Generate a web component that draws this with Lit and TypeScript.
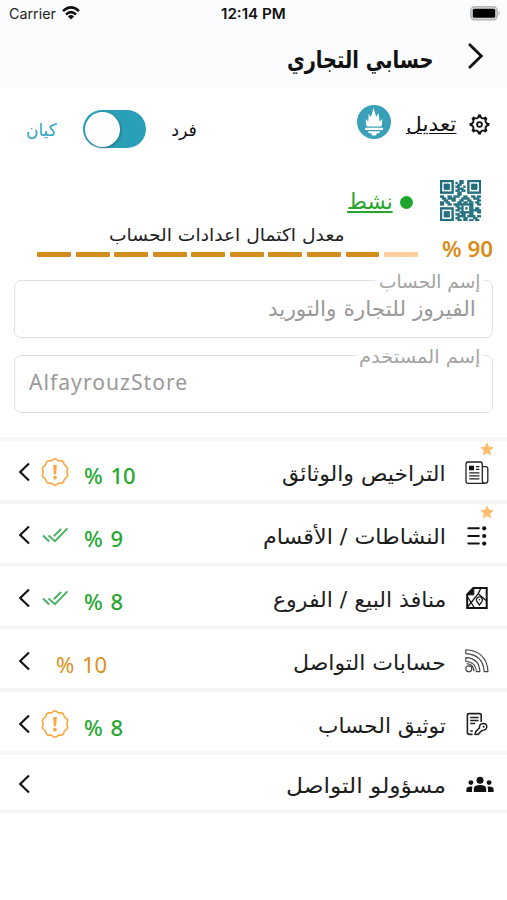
import { LitElement, html, svg, css, nothing, TemplateResult } from "lit";
import { customElement, property } from "lit/decorators.js";

/** One line of text stretched or squeezed horizontally to a given measure. */
@customElement("fit-text")
class FitText extends LitElement {
  @property({ type: Number }) measure = 100;
  static styles = css`
    :host { display: inline-block; white-space: nowrap; flex: none; }
    .run { display: inline-block; transform-origin: left center; text-decoration: inherit; text-underline-offset: inherit; }
    :host([dir="rtl"]) .run { transform-origin: right center; }
  `;
  render() {
    return html`<span class="run"><slot></slot></span>`;
  }
  updated() {
    this.style.width = `${this.measure}px`;
    const run = this.renderRoot.querySelector(".run") as HTMLElement;
    const natural = run.offsetWidth;
    if (natural) run.style.transform = `scaleX(${this.measure / natural})`;
  }
}

const QR_ROWS = [
  "111111100011001111111",
  "100000101011001000001",
  "101110100110001011101",
  "101110101100101011101",
  "101110100111001011101",
  "100000101101101000001",
  "111111100110001111111",
  "000000000110000000000",
  "110011011100110011011",
  "011011110001111001110",
  "001100110011001100011",
  "110110000110110110110",
  "110011011111111110011",
  "000000001101000110000",
  "111111100111010110110",
  "100000101101000111111",
  "101110100011111110011",
  "101110101101100110000",
  "101110100111101111011",
  "100000101100110001100",
  "111111100110110110110",
];

const scallop = (cx: number, cy: number, r: number, amp: number, lobes: number) => {
  let d = "";
  for (let i = 0; i <= 120; i++) {
    const t = (i / 120) * Math.PI * 2;
    const q = r + amp * Math.cos(lobes * t);
    d += `${i ? "L" : "M"}${(cx + q * Math.sin(t)).toFixed(2)} ${(cy - q * Math.cos(t)).toFixed(2)}`;
  }
  return d + "Z";
};

const icons: Record<string, TemplateResult> = {
  news: html`<svg width="26" height="26" viewBox="0 0 26 26" fill="none" stroke="#222" stroke-width="1.3">
    <path d="M18.3 20.5V4.2Q18.3 2 16.3 2H4Q2 2 2 4.2V21Q2 23.3 4.2 23.3H20.8Q23.8 23.3 23.8 20.6V8.6Q23.8 6.6 21.8 6.6H18.3M18.3 20.5Q18.3 23 20.6 23.2"/>
    <path d="M5.2 12.8H15.4M5.2 15.8H15.4M5.2 18.8H15.4M12 6.6H15.4M12 9.4H15.4"/>
    <path d="M5 5.7h5v4.6H5z" fill="#111" stroke="none"/></svg>`,
  list: html`<svg width="26" height="26" viewBox="0 0 26 26" stroke="#111" stroke-width="2" stroke-linecap="round">
    <path d="M4.3 5.3H14.8M4.3 13H14.8M4.3 20.6H14.8"/>
    <g fill="#111" stroke="none"><circle cx="20.2" cy="5.3" r="2.1"/><circle cx="20.2" cy="13" r="2.1"/><circle cx="20.2" cy="20.6" r="2.1"/></g></svg>`,
  map: html`<svg width="26" height="26" viewBox="0 0 26 26" fill="none" stroke="#111">
    <path d="M9.3 3H22.7V23H3.2V9.3Z" stroke-width="2"/>
    <path d="M9.8 2.6V9.8H2.6Z" fill="#111"/>
    <path d="M4 21.5L14.2 8.6L16.5 4M4 12.5L10.2 22.5M14 8.5L22 15.5" stroke-width="1.3"/>
    <path d="M15.4 20L12.8 16.3A3 3 0 1 1 18 16.3Z" stroke-width="1.3" fill="#fff"/><circle cx="15.4" cy="14.8" r=".8" fill="#111" stroke="none"/></svg>`,
  feed: html`<svg width="26" height="26" viewBox="0 0 26 26" fill="none" stroke="#444" stroke-width="1.15" stroke-linejoin="round">
    <circle cx="4.8" cy="20.8" r="3"/>
    <path d="M1.8 9.6Q15.4 10.2 15.9 23.6H12.4Q12 14 1.8 13.2Z"/>
    <path d="M1.8 1.8Q22.6 3 24 23.6H20.2Q19 6.6 1.8 5.6Z"/>
    <path d="M2.6 15.6Q9.6 16 10 23.2" /></svg>`,
  doc: html`<svg width="26" height="26" viewBox="0 0 26 26" fill="none" stroke="#222" stroke-width="1.6">
    <path d="M17.2 11V4.2Q17.2 2.6 15.4 2.6H5.2Q3.4 2.6 3.4 4.2V21.6Q3.4 23.4 5.2 23.4H8.6"/>
    <path d="M6.2 6.4H14.6M6.2 9.4H14.6M6.2 12.6H11M6.2 20H8.8" stroke-width="1.5"/>
    <path d="M11 23.2L12 20.2L15.4 17Q15.2 12.8 19 12.4Q23 12.5 22.8 16.2Q22 19.6 18 19.4L14 23.4Z" stroke-width="1.5"/>
    <circle cx="19.6" cy="15.7" r="1" fill="#222" stroke="none"/></svg>`,
  team: html`<svg class="team" width="28" height="26" viewBox="0 0 28 26" fill="#111">
    <circle cx="14" cy="9.2" r="3.5"/><circle cx="4.9" cy="11.6" r="2.4"/><circle cx="23.1" cy="11.6" r="2.4"/>
    <path d="M7.8 21.1V17.6Q8 13.9 14 13.9T20.2 17.6V21.1ZM.4 21.1V18.2Q.6 15.6 4.6 15.4L6.6 15.7Q6 16.8 6 18.2V21.1ZM27.6 21.1V18.2Q27.4 15.6 23.4 15.4L21.4 15.7Q22 16.8 22 18.2V21.1Z"/></svg>`,
};

const star = html`<svg class="star" width="14" height="14" viewBox="0 0 14 14" fill="#fdbd6c"><path d="M7 .3L9 4.8L13.8 5.3L10.2 8.5L11.2 13.4L7 10.9L2.8 13.4L3.8 8.5L.2 5.3L5 4.8Z"/></svg>`;
const chevron = html`<svg class="chev" width="12" height="20" viewBox="0 0 12 20" fill="none" stroke="#111" stroke-width="2.1"><path d="M11 1.6L2.2 10L11 18.4"/></svg>`;
const warn = html`<svg class="state" width="28" height="28" viewBox="0 0 28 28" fill="none" stroke="#f9a73e" stroke-width="1.6">
  <path d="${scallop(14, 14, 12.5, 0.65, 10)}"/><path d="M12.2 7H15.8L15.2 16.2H12.8Z" fill="#f9a73e" stroke="none"/><circle cx="14" cy="19.6" r="1.9" fill="#f9a73e" stroke="none"/></svg>`;
const checks = html`<svg class="state" width="28" height="28" viewBox="0 0 28 28" fill="none" stroke="#4cb265" stroke-width="2">
  <path d="M2 14.6L8.2 20.4M7.6 14.6L14 20.2L26.4 7.4M12.8 15.2L20.2 8"/></svg>`;

interface Item {
  label: string;
  measure: number;
  icon: string;
  value?: number;
  state?: "warn" | "ok";
  starred?: boolean;
}

const ITEMS: Item[] = [
  { label: "التراخيص والوثائق", measure: 164, icon: "news", value: 10, state: "warn", starred: true },
  { label: "النشاطات / الأقسام", measure: 183, icon: "list", value: 9, state: "ok", starred: true },
  { label: "منافذ البيع / الفروع", measure: 173, icon: "map", value: 8, state: "ok" },
  { label: "حسابات التواصل", measure: 153, icon: "feed", value: 10 },
  { label: "توثيق الحساب", measure: 128, icon: "doc", value: 8, state: "warn" },
  { label: "مسؤولو التواصل", measure: 160, icon: "team" },
];

@customElement("app-root")
class AppRoot extends LitElement {
  static styles = css`
    :host {
      display: block; width: 507px; height: 900px; overflow: hidden; background: #fff; color: #111;
      font-family: "Noto Sans", "DejaVu Sans", sans-serif;
    }
    * { box-sizing: border-box; }
    svg { display: block; flex: none; }
    fit-text[dir="rtl"] { font-family: "DejaVu Sans", sans-serif; }
    .top { height: 88px; background: #fafcfe; }
    .status {
      height: 28px; display: grid; grid-template-columns: 1fr auto 1fr; align-items: center;
      padding: 0 6px 0 9px; font: 14px/28px Inter, "Liberation Sans", sans-serif; color: #222;
    }
    .carrier { display: flex; align-items: center; gap: 6px; }
    .carrier svg { margin-top: -2px; }
    .clock { font-weight: 600; color: #111; margin-left: -3px; }
    .battery { justify-self: end; margin-top: -2px; }
    .title { height: 60px; display: flex; justify-content: flex-end; align-items: center; gap: 34px; padding: 0 23px 4px 0; }
    .title fit-text { font-weight: 700; font-size: 24px; line-height: 32px; margin: 7px -1px 0 0; }
    .modes { height: 82px; display: flex; align-items: center; padding: 0 17px 0 26px; }
    .modes fit-text { font-size: 17.5px; line-height: 24px; margin-top: 2px; }
    .teal { color: #2fa5bf; }
    .toggle { width: 63px; height: 38px; border-radius: 19px; background: #2a9fb8; padding: 1.5px; margin: 0 25px 0 26px; }
    .knob { width: 35px; height: 35px; border-radius: 50%; background: #fff; box-shadow: 1px 1px 3px #0004; }
    .spring { flex: 1; }
    .torch { margin: -14px 15px 0 0; }
    .modes .edit { font-size: 20px; text-decoration: underline 1.3px; text-underline-offset: 2px; margin: -10px 13px 0 0; }
    .gear { margin-top: -9px; }
    .state-row { height: 52px; display: flex; justify-content: flex-end; align-items: center; padding: 8px 26px 0 0; }
    .state-row fit-text { font-size: 22px; line-height: 30px; margin-top: 4px; color: #27a52d; text-decoration: underline 1.6px; text-underline-offset: 2px; }
    .dot { width: 13px; height: 13px; border-radius: 50%; background: #1fa52b; margin: 4px 27px 0 7px; }
    .progress { height: 40px; display: flex; justify-content: space-between; padding: 0 14px 0 37px; }
    .meter { width: 381px; display: flex; flex-direction: column; align-items: center; }
    .meter fit-text { font-size: 17.5px; line-height: 27px; height: 30px; margin-left: -1px; color: #222; }
    .bars { display: flex; gap: 4.6px; width: 100%; }
    .bar { flex: 1; height: 5px; border-radius: 1px; background: #d58c1f; }
    .bar.rest { background: #f9cf9d; }
    .total { font-size: 22px; line-height: 32px; font-weight: 600; color: #d98b1c; padding-top: 10px; }
    .fields { padding: 8px 14px 0; display: flex; flex-direction: column; gap: 7px; }
    fieldset { margin: 0; min-width: 0; height: 68px; border: 1.5px solid #e0e0e0; border-radius: 7px; padding: 0 16px; text-align: right; }
    fieldset > legend { margin: 0 -8px 0 auto; padding: 0 4px; height: 20px; line-height: 20px; font-size: 18px; color: #a3a3a3; }
    legend fit-text { line-height: 17px; margin-top: 3px; }
    .value { height: 38px; display: flex; justify-content: flex-end; align-items: center; color: #999; font-size: 21px; line-height: 30px; padding-bottom: 1px; }
    .value.latin { justify-content: flex-start; padding-bottom: 4px; }
    .value.latin fit-text { font-size: 21px; letter-spacing: 1px; margin-left: -3px; }
    .list { margin-top: 24px; border-top: 4px solid #f6f6f6; }
    .item { height: 62.8px; border-bottom: 4px solid #f6f6f6; display: flex; align-items: center; padding: 0 14px 0 18px; }
    .item:last-child { height: 58px; }
    .chev { margin-top: 4px; }
    .item .state { margin: 4px 0 0 11px; }
    .pct { margin: 10px 0 0 15px; font-size: 22px; line-height: 30px; color: #27a832; font-weight: 500; word-spacing: 2px; }
    .pct.partial { margin-left: 26px; color: #de8f22; font-weight: 400; }
    .item fit-text { margin: 8px 18px 0 auto; font-size: 21px; line-height: 30px; color: #1c1c1c; }
    .mark { position: relative; width: 29px; height: 26px; margin-top: 5px; display: flex; }
    .team { margin-left: 2px; }
    .star { position: absolute; left: 16px; top: -18px; }
  `;

  private qr() {
    const cells: TemplateResult[] = [];
    QR_ROWS.forEach((row, y) =>
      [...row].forEach((c, x) => {
        if (c === "1") cells.push(svg`<rect x=${x} y=${y} width="1.05" height="1.05"/>` as TemplateResult);
      })
    );
    return html`<svg width="41" height="41" viewBox="0 0 21 21" fill="#1f6d7c" stroke="#1f6d7c" stroke-width=".12">${cells}</svg>`;
  }

  private item(i: Item) {
    return html`<div class="item">
      ${chevron}
      ${i.state === "warn" ? warn : i.state === "ok" ? checks : nothing}
      ${i.value !== undefined ? html`<span class="pct ${i.state ? "" : "partial"}">% ${i.value}</span>` : nothing}
      <fit-text dir="rtl" .measure=${i.measure}>${i.label}</fit-text>
      <div class="mark">${i.starred ? star : nothing}${icons[i.icon]}</div>
    </div>`;
  }

  render() {
    return html`
      <div class="top">
        <div class="status">
          <div class="carrier">
            <fit-text .measure=${47}>Carrier</fit-text>
            <svg width="18" height="14" viewBox="0 0 18 14" fill="none" stroke="#111" stroke-width="2.5">
              <path d="M1 5.2Q9-2.4 17 5.2M4 8.5Q9 3.8 14 8.5"/><path d="M9 13.5L5.9 10.4Q9 7.8 12.1 10.4Z" fill="#111" stroke="none"/></svg>
          </div>
          <fit-text class="clock" .measure=${65}>12:14 PM</fit-text>
          <svg class="battery" width="31" height="15" viewBox="0 0 31 15"><rect x=".8" y=".8" width="26.4" height="13" rx="4" fill="#ddd" stroke="#b5b5b5" stroke-width="1.5"/><rect x="2.8" y="2.8" width="22.4" height="9" rx="1.5" fill="#000"/><path d="M28.6 5Q31 7.3 28.6 9.6Z" fill="#aaa"/></svg>
        </div>
        <div class="title">
          <fit-text dir="rtl" .measure=${147}>حسابي التجاري</fit-text>
          <svg width="17" height="28" viewBox="0 0 17 28" fill="none" stroke="#111" stroke-width="2.8"><path d="M2 2L14.3 14L2 26"/></svg>
        </div>
      </div>
      <div class="modes">
        <fit-text class="teal" dir="rtl" .measure=${31}>كيان</fit-text>
        <div class="toggle"><div class="knob"></div></div>
        <fit-text dir="rtl" .measure=${26}>فرد</fit-text>
        <div class="spring"></div>
        <svg class="torch" width="34" height="34" viewBox="0 0 34 34"><circle cx="17" cy="17" r="17" fill="#3a9fb8"/>
          <path d="M9 19.5L8.8 14L11.4 16.5L11.6 9L14 12L16.6 3L19.2 12L21.4 8L22.6 16.5L25.2 14L25 19.5Q24.8 21.5 23.5 21.5H10.5Q9.2 21.5 9 19.5ZM8 22.8H26V25H8ZM10.8 26.2H23.2L22 28.3H20L18.8 30.4H15.2L14 28.3H12Z" fill="#fff"/></svg>
        <fit-text class="edit" dir="rtl" .measure=${50}>تعديل</fit-text>
        <svg class="gear" width="21" height="21" viewBox="0 0 21 21" fill="none" stroke="#111">
          <path d="${scallop(10.5, 10.5, 7.4, 0.7, 8)}" stroke-width="1.9"/>
          <path d="M10.5 .6V3.4M10.5 17.6V20.4M.6 10.5H3.4M17.6 10.5H20.4M3.5 3.5L5.5 5.5M15.5 15.5L17.5 17.5M3.5 17.5L5.5 15.5M15.5 5.5L17.5 3.5" stroke-width="3.2"/>
          <circle cx="10.5" cy="10.5" r="2.4" stroke-width="1.8"/></svg>
      </div>
      <div class="state-row">
        <fit-text dir="rtl" .measure=${46}>نشط</fit-text>
        <div class="dot"></div>
        ${this.qr()}
      </div>
      <div class="progress">
        <div class="meter">
          <fit-text dir="rtl" .measure=${235}>معدل اكتمال اعدادات الحساب</fit-text>
          <div class="bars">${Array.from({ length: 10 }, (_, n) => html`<div class="bar ${n === 9 ? "rest" : ""}"></div>`)}</div>
        </div>
        <fit-text class="total" .measure=${51}>% 90</fit-text>
      </div>
      <div class="fields">
        <fieldset>
          <legend><fit-text dir="rtl" .measure=${101}>إسم الحساب</fit-text></legend>
          <div class="value"><fit-text dir="rtl" .measure=${208}>الفيروز للتجارة والتوريد</fit-text></div>
        </fieldset>
        <fieldset>
          <legend><fit-text dir="rtl" .measure=${121}>إسم المستخدم</fit-text></legend>
          <div class="value latin"><fit-text .measure=${159}>AlfayrouzStore</fit-text></div>
        </fieldset>
      </div>
      <div class="list">${ITEMS.map((i) => this.item(i))}</div>
    `;
  }
}
